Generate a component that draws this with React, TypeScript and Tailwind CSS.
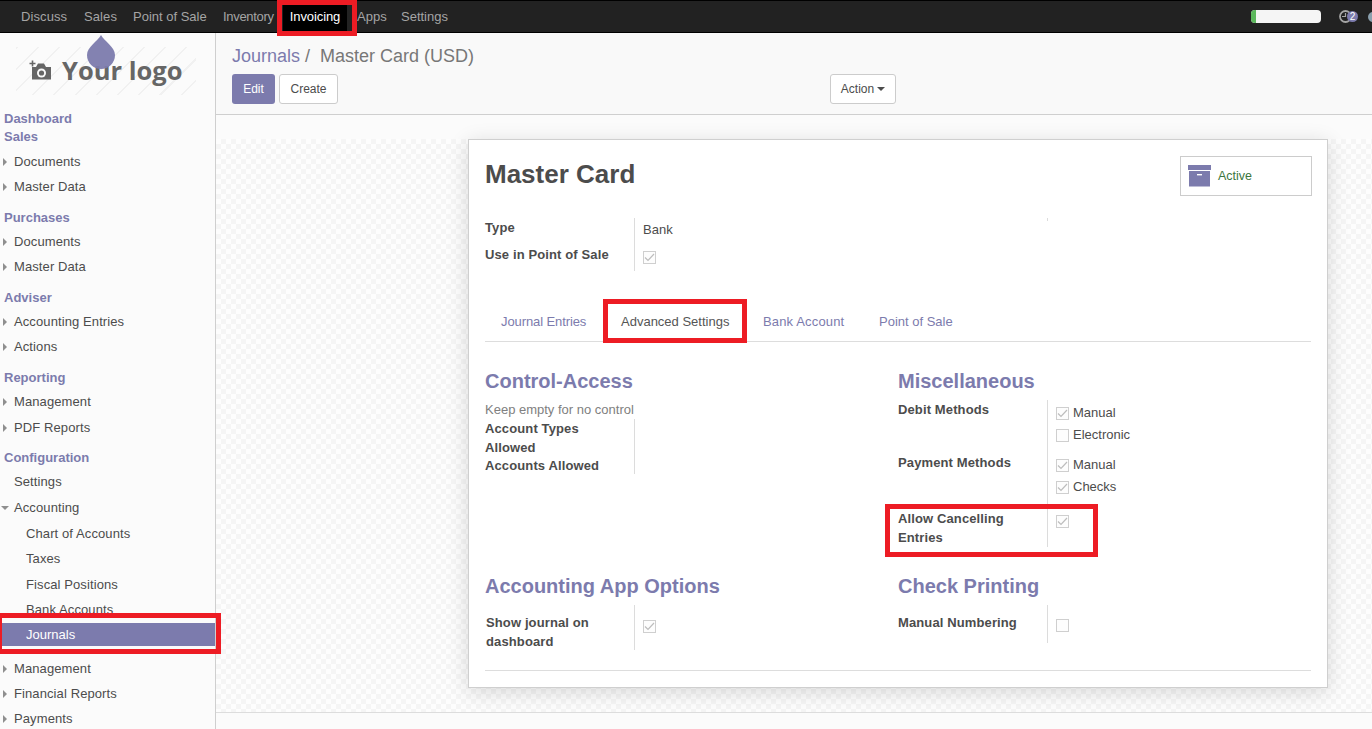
import React from "react";

const P = "text-[#7c7bad]";

type Row = { label: string; kind: "head" | "item" | "sub" | "active"; h: string; caret?: "r" | "d" };
const rows: Row[] = [
  { label: "Dashboard", kind: "head", h: "h-[18px]" },
  { label: "Sales", kind: "head", h: "h-[18px]" },
  { label: "Documents", kind: "item", h: "h-[25px]", caret: "r" },
  { label: "Master Data", kind: "item", h: "h-[25px]", caret: "r" },
  { label: "Purchases", kind: "head", h: "h-[31px]" },
  { label: "Documents", kind: "item", h: "h-[24px]", caret: "r" },
  { label: "Master Data", kind: "item", h: "h-[25px]", caret: "r" },
  { label: "Adviser", kind: "head", h: "h-[31px]" },
  { label: "Accounting Entries", kind: "item", h: "h-[24px]", caret: "r" },
  { label: "Actions", kind: "item", h: "h-[25px]", caret: "r" },
  { label: "Reporting", kind: "head", h: "h-[31px]" },
  { label: "Management", kind: "item", h: "h-[24px]", caret: "r" },
  { label: "PDF Reports", kind: "item", h: "h-[26px]", caret: "r" },
  { label: "Configuration", kind: "head", h: "h-[30px]" },
  { label: "Settings", kind: "item", h: "h-[24px]" },
  { label: "Accounting", kind: "item", h: "h-[26px]", caret: "d" },
  { label: "Chart of Accounts", kind: "sub", h: "h-[26px]" },
  { label: "Taxes", kind: "sub", h: "h-[25px]" },
  { label: "Fiscal Positions", kind: "sub", h: "h-[26px]" },
  { label: "Bank Accounts", kind: "sub", h: "h-[25px]" },
  { label: "Journals", kind: "active", h: "h-[23px]" },
  { label: "Management", kind: "item", h: "h-[34px]", caret: "r" },
  { label: "Financial Reports", kind: "item", h: "h-[25px]", caret: "r" },
  { label: "Payments", kind: "item", h: "h-[25px]", caret: "r" },
];

function SideRow({ r }: { r: Row }) {
  if (r.kind === "head")
    return (
      <div className={`${r.h} pl-1 flex items-end font-bold ${P} leading-[18px]`}>{r.label}</div>
    );
  if (r.kind === "active")
    return (
      <div className="h-[23px] mt-[4px] -mb-[2px] bg-[#7c7bad] text-white pl-[26px] flex items-center w-[215px]">
        {r.label}
      </div>
    );
  return (
    <div className={`${r.h} flex items-end text-[#4c4c4c] leading-[18px] relative tracking-[0.1px] ${r.kind === "sub" ? "pl-[26px]" : "pl-[14px]"}`}>
      {r.caret === "r" && (
        <span className="absolute left-[3px] bottom-[5px] w-0 h-0 border-y-[4px] border-y-transparent border-l-[4px] border-l-[#8f8f8f]" />
      )}
      {r.caret === "d" && (
        <span className="absolute left-[1px] bottom-[7px] w-0 h-0 border-x-[4px] border-x-transparent border-t-[4px] border-t-[#8f8f8f]" />
      )}
      {r.label}
    </div>
  );
}

function Check({ on }: { on?: boolean }) {
  return (
    <span className="w-[13px] h-[13px] border border-[#cfcfcf] bg-[#fdfdfd] inline-flex items-center justify-center shrink-0">
      {on && (
        <svg width="11" height="11" viewBox="0 0 11 11" fill="none">
          <path d="M1 5.5 L4 8.5 L10 2" stroke="#bdbdbd" strokeWidth="1.2" />
        </svg>
      )}
    </span>
  );
}

function CheckRow({ label, on, h }: { label: string; on?: boolean; h: string }) {
  return (
    <div className={`flex items-center gap-[4px] ${h} text-[#4c4c4c]`}>
      <Check on={on} />
      <span>{label}</span>
    </div>
  );
}

function Logo() {
  return (
    <div className="h-[81px] relative">
      <div className="absolute left-[16px] top-[14px] w-[180px] h-[48px] bg-[repeating-linear-gradient(135deg,#f1f1f1_0,#f1f1f1_1.5px,#fbfbfb_1.5px,#fbfbfb_15px)]" />
      <svg className="absolute left-[28px] top-[26px]" width="24" height="24" viewBox="0 0 24 24">
        <path d="M1.5 4.5h6M4.5 1.5v6" stroke="#666666" strokeWidth="1.6" fill="none" />
        <path d="M4 8h4l2-3.5h6l2 3.5h5v12.5H4z" fill="#666666" />
        <circle cx="13.5" cy="14" r="4.5" fill="#fafafa" />
        <circle cx="13.5" cy="14" r="2.6" fill="#666666" />
      </svg>
      <span className="absolute left-[62px] top-[19px] font-['Open_Sans',sans-serif] font-bold text-[25.5px] leading-[36px] text-[#666666]">
        Your logo
      </span>
      <svg className="absolute left-[86px] top-[1px]" width="30" height="36" viewBox="0 0 30 36">
        <path d="M15 1 C18 7 29 13 29 21 A14 14 0 0 1 1 21 C1 13 12 7 15 1Z" fill="#7c7bad" fillOpacity="0.95" />
      </svg>
    </div>
  );
}

function Label({ children, className = "" }: { children: React.ReactNode; className?: string }) {
  return <div className={`font-bold text-[#4c4c4c] leading-[18.5px] tracking-[0.12px] ${className}`}>{children}</div>;
}

function Heading({ children }: { children: React.ReactNode }) {
  return <div className={`text-[20px] font-bold ${P} leading-[24px]`}>{children}</div>;
}

const menu: [string, string, string][] = [
  ["Discuss", "w-[63px]", "tracking-[0.1px]"],
  ["Sales", "w-[49px]", "tracking-[0.1px]"],
  ["Point of Sale", "w-[90px]", "tracking-[0px]"],
  ["Inventory", "w-[60px]", "tracking-[-0.3px]"],
];

export default function App() {
  return (
    <div className="w-[1372px] h-[729px] overflow-hidden relative bg-[#f9f9f9] font-['Liberation_Sans',Arial,sans-serif] text-[13px] flex flex-col">
      {/* top bar */}
      <header className="h-[33px] shrink-0 bg-[#222222] border-t border-t-black border-b border-b-black flex items-center text-[#a5a5a5] pl-[21px] overflow-hidden">
        {menu.map(([m, w, t]) => (
          <span key={m} className={`${w} ${t} leading-[31px] shrink-0`}>{m}</span>
        ))}
        <span className="w-[64px] h-[31px] bg-black text-white flex items-center justify-center shrink-0 tracking-[-0.1px]">Invoicing</span>
        <span className="ml-[10px] w-[44px] shrink-0">Apps</span>
        <span className="shrink-0">Settings</span>
        <div className="ml-auto w-[70px] h-[13px] rounded-[4px] bg-[#f5f5f5] overflow-hidden shrink-0">
          <div className="w-[5px] h-full bg-[#5cb85c]" />
        </div>
        <div className="ml-[18px] w-[13px] h-[13px] shrink-0 relative">
          <svg width="13" height="13" viewBox="0 0 13 13" fill="none">
            <circle cx="6.5" cy="6.5" r="5.5" stroke="#a5a5a5" strokeWidth="1.8" />
            <path d="M6.5 3v3.5H3" stroke="#a5a5a5" strokeWidth="1.2" />
          </svg>
          <span className="absolute left-[8px] top-[1px] w-[11px] h-[11px] rounded-full bg-[#7c7bad] text-white text-[10px] leading-[11px] text-center">2</span>
        </div>
        <div className="ml-[16px] w-[12px] h-[10px] rounded-full bg-[#8aa0ae] shrink-0 -mr-[8px]" />
      </header>

      <div className="flex flex-1 min-h-0">
        {/* sidebar */}
        <aside className="w-[216px] shrink-0 border-r border-[#cfcfcf] overflow-hidden bg-[#fbfbfb]">
          <Logo />
          <div className="-mt-[4px]">
            {rows.map((r, i) => (
              <SideRow key={i} r={r} />
            ))}
          </div>
        </aside>

        {/* main */}
        <main className="flex-1 min-w-0 flex flex-col">
          <div className="h-[82px] shrink-0 border-b border-[#cfcfcf] bg-[#f9f9f9] pl-[16px] pt-[11px]">
            <div className="text-[18px] leading-[24px] text-[#777777]">
              <span className={P}>Journals</span>
              <span> /&nbsp; Master Card (USD)</span>
            </div>
            <div className="flex mt-[6px] relative">
              <button className="w-[43px] h-[30px] rounded-[3px] bg-[#7c7bad] text-white text-[12px]">Edit</button>
              <button className="ml-[4px] w-[59px] h-[30px] rounded-[3px] bg-white border border-[#cccccc] text-[#4c4c4c] text-[12px]">Create</button>
              <button className="ml-[492px] w-[66px] h-[30px] rounded-[3px] bg-white border border-[#cccccc] text-[#4c4c4c] text-[12px] flex items-center justify-center gap-[3px]">
                Action
                <span className="w-0 h-0 border-x-[4px] border-x-transparent border-t-[4px] border-t-[#4c4c4c]" />
              </button>
            </div>
          </div>

          <div className="flex-1 min-h-0 pt-[24px] bg-[#fbfbfb]">
            <div className="h-[574px] border-b border-[#dddddd] pl-[252px] bg-[conic-gradient(#f5f5f5_25%,#fdfdfd_0_50%,#f5f5f5_0_75%,#fdfdfd_0)] bg-[length:10px_10px]">
              <section className="w-[860px] h-[549px] bg-white border border-[#cfcfcf] shadow-[0_4px_20px_rgba(0,0,0,0.14)] pl-[16px] pr-[15px] pt-[16px] text-[#4c4c4c]">
                <div className="flex justify-between">
                  <h1 className="text-[26px] font-bold leading-[36px] text-[#4c4c4c]">Master Card</h1>
                  <div className="w-[132px] h-[40px] border border-[#cccccc] flex items-center pl-[7px] gap-[7px]">
                    <svg width="23" height="22" viewBox="0 0 23 22">
                      <rect x="0" y="0" width="23" height="5" fill="#7c7bad" />
                      <rect x="1" y="6" width="21" height="15.5" fill="#7c7bad" />
                      <rect x="9" y="9" width="5" height="1.4" fill="#ffffff" />
                    </svg>
                    <span className="text-[#3c763d] text-[12.5px]">Active</span>
                  </div>
                </div>

                <div className="flex mt-[22px]">
                  <div className="w-[150px] border-r border-[#dcdcdc] h-[53px] pt-[1px]">
                    <Label>Type</Label>
                    <Label className="mt-[8px]">Use in Point of Sale</Label>
                  </div>
                  <div className="pl-[8px] pt-[3px] w-[412px]">
                    <div className="leading-[18px]">Bank</div>
                    <div className="mt-[10px]"><Check on /></div>
                  </div>
                  <div className="flex-1 h-[3px] border-l border-[#dcdcdc]" />
                </div>

                <div className="mt-[28px] mr-[1px] flex border-b border-[#dddddd] h-[43px]">
                  {[
                    ["Journal Entries", "w-[120px]", "tracking-[-0.1px]"],
                    ["Advanced Settings", "w-[142px]", "tracking-[0px]"],
                    ["Bank Account", "w-[116px]", "tracking-[0.15px]"],
                    ["Point of Sale", "w-[106px]", "tracking-[0px]"],
                  ].map(([t, w, tr], i) => (
                    <span key={t} className={`${w} ${tr} pl-[16px] pt-[14px] leading-[18px] ${i === 1 ? "text-[#555555]" : P}`}>{t}</span>
                  ))}
                </div>

                <div className="flex mt-[27px]">
                  <div className="w-[413px]">
                    <Heading>Control-Access</Heading>
                    <div className="text-[#808080] mt-[8px] leading-[18px]">Keep empty for no control</div>
                    <div className="w-[150px] border-r border-[#dcdcdc] h-[55px] pt-[1px]">
                      <Label className="w-[120px]">Account Types Allowed</Label>
                      <Label>Accounts Allowed</Label>
                    </div>
                  </div>
                  <div className="flex-1">
                    <Heading>Miscellaneous</Heading>
                    <div className="flex mt-[7px]">
                      <div className="w-[150px] border-r border-[#dcdcdc] h-[147px] pt-[1px]">
                        <Label>Debit Methods</Label>
                        <Label className="mt-[34px]">Payment Methods</Label>
                        <Label className="mt-[38px] w-[120px]">Allow Cancelling Entries</Label>
                      </div>
                      <div className="pl-[8px] pt-[2px]">
                        <CheckRow label="Manual" on h="h-[22px]" />
                        <CheckRow label="Electronic" h="h-[22px]" />
                        <div className="h-[8px]" />
                        <CheckRow label="Manual" on h="h-[22px]" />
                        <CheckRow label="Checks" on h="h-[22px]" />
                        <div className="mt-[15px]"><Check on /></div>
                      </div>
                    </div>
                  </div>
                </div>

                <div className="flex mt-[27px] h-[78px]">
                  <div className="w-[413px]">
                    <Heading>Accounting App Options</Heading>
                    <div className="flex mt-[7px]">
                      <div className="w-[150px] border-r border-[#dcdcdc] h-[45px] pt-[9px] pl-[1px]">
                        <Label className="w-[120px]">Show journal on dashboard</Label>
                      </div>
                      <div className="pl-[8px] pt-[13px]"><Check on /></div>
                    </div>
                  </div>
                  <div className="flex-1">
                    <Heading>Check Printing</Heading>
                    <div className="flex mt-[7px]">
                      <div className="w-[150px] border-r border-[#dcdcdc] h-[38px] pt-[9px]">
                        <Label>Manual Numbering</Label>
                      </div>
                      <div className="pl-[8px] pt-[13px]"><Check /></div>
                    </div>
                  </div>
                </div>
                <div className="mt-[18px] mr-[1px] border-b border-[#dddddd]" />
              </section>
            </div>
          </div>
        </main>
      </div>

      {/* red annotation boxes */}
      <div className="absolute left-[277px] top-0 w-[80px] h-[36px] border-[5px] border-[#ed1c24]" />
      <div className="absolute left-[603px] top-[299px] w-[144px] h-[44px] border-[5px] border-[#ed1c24]" />
      <div className="absolute left-[885px] top-[504px] w-[213px] h-[53px] border-[5px] border-[#ed1c24]" />
      <div className="absolute left-0 top-[613px] w-[221px] h-[41px] border-[5px] border-l-[2px] border-[#ed1c24]" />
    </div>
  );
}
